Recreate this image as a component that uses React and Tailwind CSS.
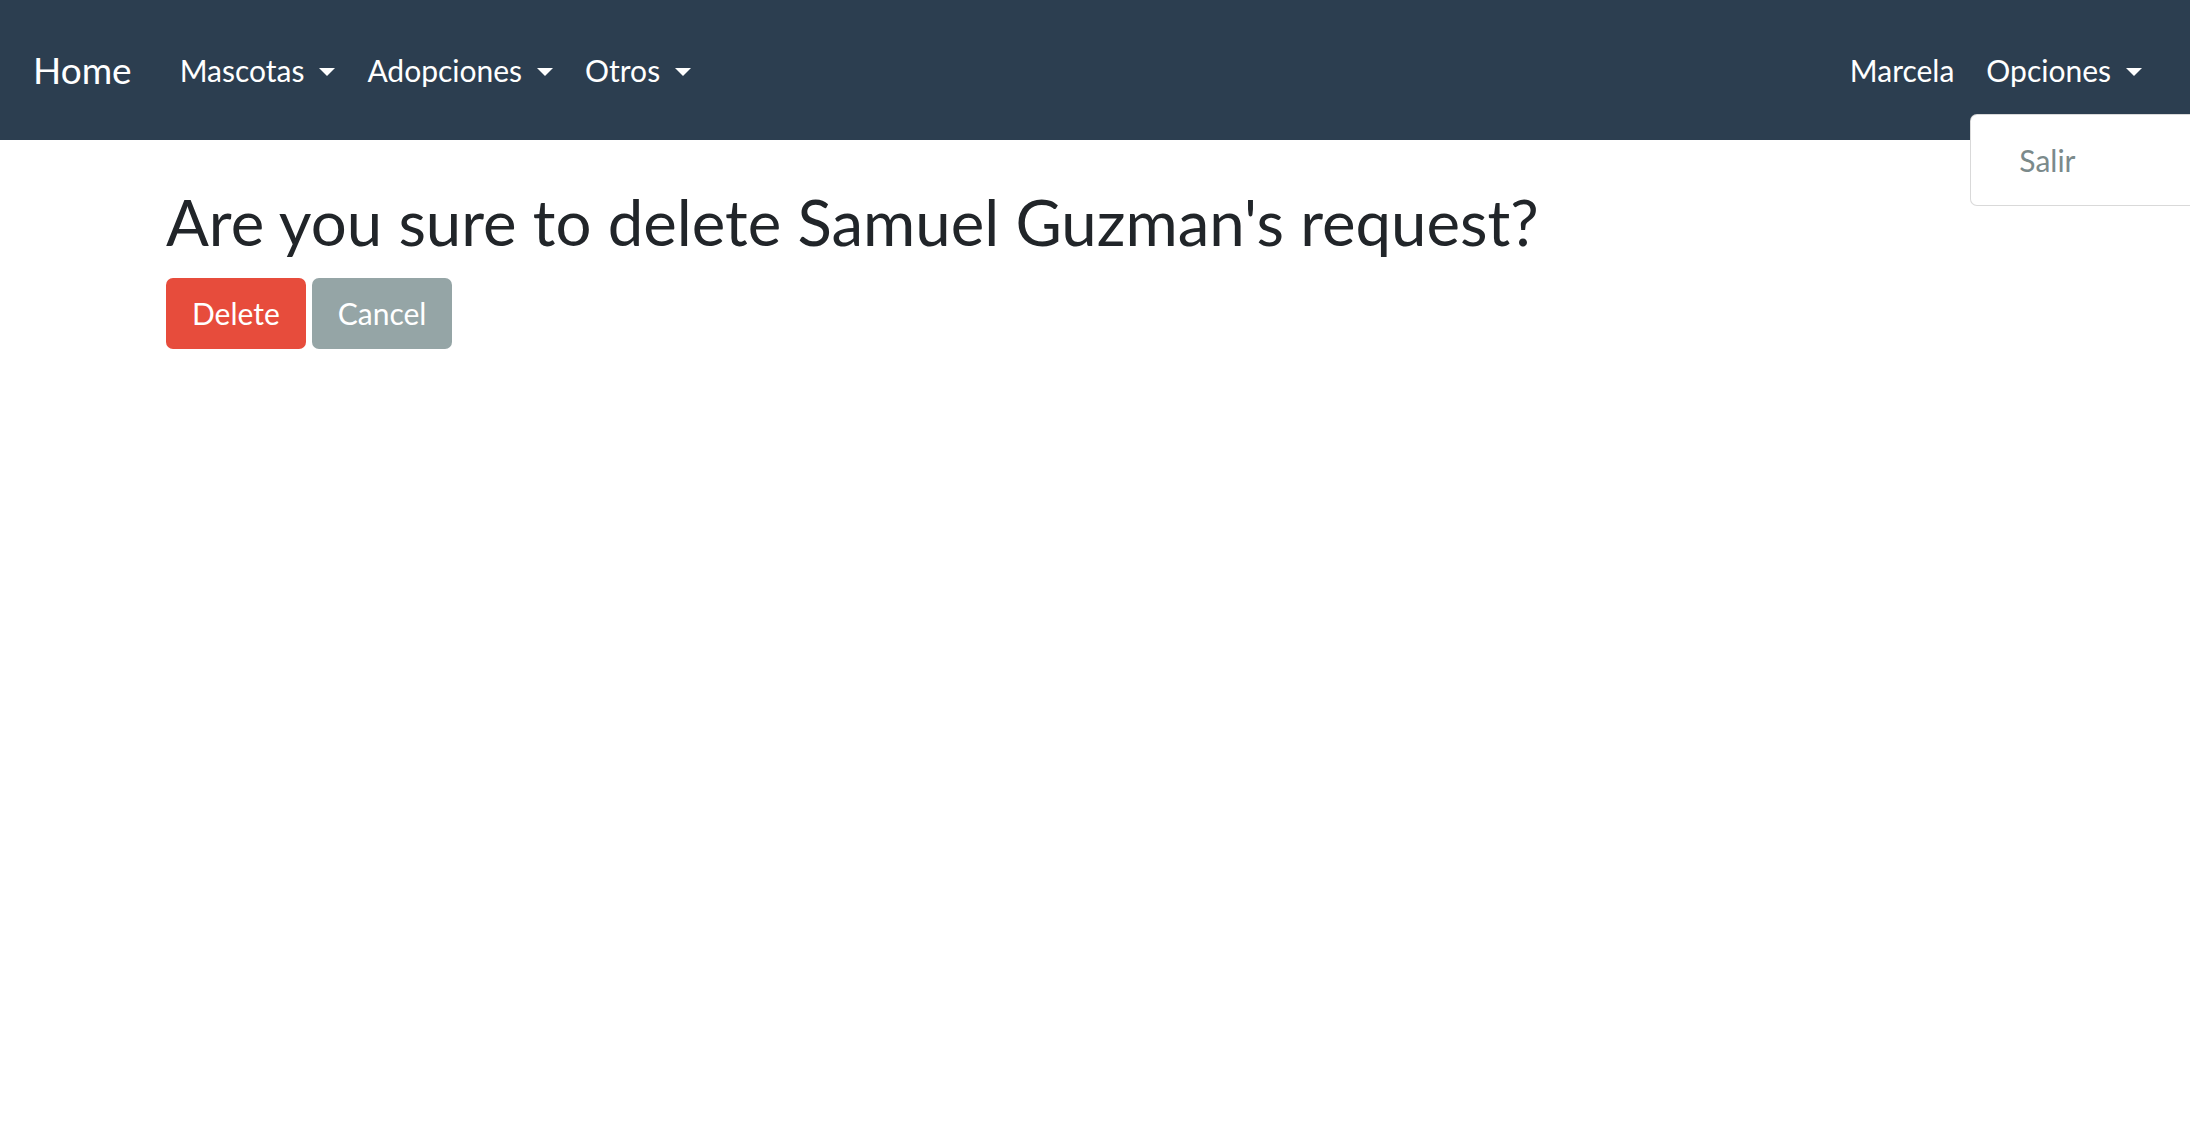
import React from "react";

const Caret = () => (
  <span className="ml-[15px] inline-block h-0 w-0 border-x-[8px] border-t-[8px] border-x-transparent border-t-white align-[0.2em]"></span>
);

const NavLink = ({ label, caret }) => (
  <a href="#" className="px-[16px] py-[8px] text-[30px] leading-[1.2] text-white">
    {label}
    {caret && <Caret />}
  </a>
);

const App = () => {
  return (
    <div className="relative min-h-screen w-full overflow-hidden bg-white font-['Lato','Liberation_Sans',sans-serif] text-[#212529]">
      <nav className="flex h-[140px] items-center bg-[#2c3e50] pl-[33px] pr-[32px]">
        <a href="#" className="mr-[32px] text-[37px] leading-[1.2] text-white">Home</a>
        <div className="flex items-center">
          <NavLink label="Mascotas" caret />
          <NavLink label="Adopciones" caret />
          <NavLink label="Otros" caret />
        </div>
        <div className="ml-auto flex items-center">
          <NavLink label="Marcela" />
          <div className="relative">
            <NavLink label="Opciones" caret />
            <div className="absolute left-0 top-full mt-[26px] w-[320px] rounded-[7px] border border-black/15 bg-white py-[12px]">
              <a href="#" className="block px-[48px] py-[15px] text-[30px] leading-[1.2] text-[#7b8a8b]">Salir</a>
            </div>
          </div>
        </div>
      </nav>
      <main className="px-[166px] pt-[44px]">
        <h1 className="mb-[18px] text-[63.5px] leading-[1.2] font-normal">Are you sure to delete Samuel Guzman's request?</h1>
        <div className="flex gap-[6px]">
          <button className="flex h-[71px] items-center rounded-[7px] bg-[#e74c3c] px-[26px] text-[30px] text-white">Delete</button>
          <button className="flex h-[71px] items-center rounded-[7px] bg-[#95a5a6] px-[26px] text-[30px] text-white">Cancel</button>
        </div>
      </main>
    </div>
  );
};

export default App;
